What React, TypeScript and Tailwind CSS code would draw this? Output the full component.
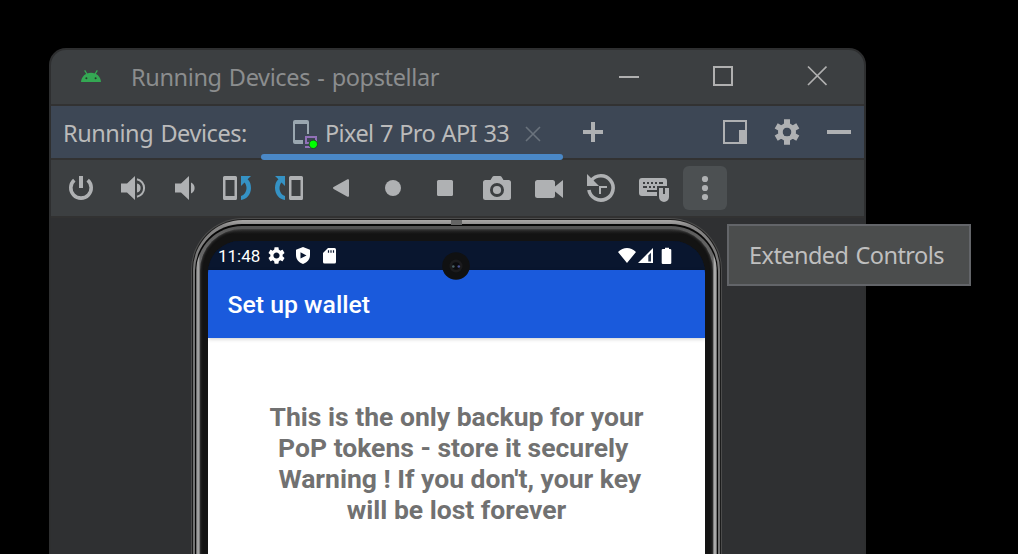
import type { ReactNode } from "react";

function Icon({ children }: { children: ReactNode }) {
  return (
    <svg width="32" height="32" viewBox="0 0 32 32" fill="#afb1b3" className="block shrink-0">
      {children}
    </svg>
  );
}

function RotateShape() {
  return (
    <>
      <path fillRule="evenodd" d="M3.5 4h11a1.5 1.5 0 0 1 1.500 1.500v21a1.500 1.500 0 0 1-1.500 1.500h-11a1.500 1.500 0 0 1-1.500-1.500v-21a1.500 1.500 0 0 1 1.500-1.500zM4.500 8v16h9V8z" />
      <path fill="#3592c4" d="M20 4h10l-3.400 3.200C29 9.300 30 12.500 30 16c0 6.500-4.500 11.500-10 12v-4c3-.8 5.500-4 5.500-8 0-2.300-.8-4.300-2-5.600L20 14z" />
    </>
  );
}

const tools: { name: string; icon: ReactNode }[] = [
  {
    name: "power",
    icon: (
      <>
        <path d="M9.300 8.200A10.200 10.200 0 1 0 22.700 8.200" fill="none" stroke="#afb1b3" strokeWidth="3.600" />
        <path d="M14 4h4v12h-4z" />
      </>
    ),
  },
  {
    name: "volume-up",
    icon: (
      <>
        <path d="M4 11.500h6L18 4v24l-8-7.500H4zM20 11.500a4.600 4.600 0 0 1 0 9z" />
        <path d="M20 7.200a9 9 0 0 1 0 17.600" fill="none" stroke="#afb1b3" strokeWidth="2" />
      </>
    ),
  },
  { name: "volume-down", icon: <path d="M6 11.500h6L20 4v24l-8-7.500H6zM22 10.500a6 6 0 0 1 0 11z" /> },
  { name: "rotate-left", icon: <RotateShape /> },
  {
    name: "rotate-right",
    icon: (
      <g transform="matrix(-1 0 0 1 32 0)">
        <RotateShape />
      </g>
    ),
  },
  { name: "back", icon: <path d="M22.500 7.300a1 1 0 0 1 1.500.9v15.600a1 1 0 0 1-1.500.9L8.600 16.900a1 1 0 0 1 0-1.800z" /> },
  { name: "home", icon: <circle cx="16" cy="16" r="8" /> },
  { name: "overview", icon: <rect x="8" y="8" width="16" height="16" rx="1.500" /> },
  {
    name: "camera",
    icon: (
      <>
        <path fillRule="evenodd" d="M4.500 8H9.500L11.500 4.800Q12 4 13 4h6q1 0 1.500.8L22.500 8h5A2.500 2.500 0 0 1 30 10.500v15a2.500 2.500 0 0 1-2.500 2.500h-23A2.500 2.500 0 0 1 2 25.500v-15A2.500 2.500 0 0 1 4.500 8zM16 11a7 7 0 1 0 0 14 7 7 0 0 0 0-14z" />
        <circle cx="16" cy="18" r="4.100" />
      </>
    ),
  },
  {
    name: "record",
    icon: <path d="M4.500 8h15A2.500 2.500 0 0 1 22 10.500v4L30 8v18l-8-6.500v4a2.500 2.500 0 0 1-2.500 2.500h-15A2.500 2.500 0 0 1 2 23.500v-13A2.500 2.500 0 0 1 4.500 8z" />,
  },
  {
    name: "snapshots",
    icon: (
      <>
        <path d="M6.200 8.500A12.200 12.200 0 1 1 3.900 18" fill="none" stroke="#afb1b3" strokeWidth="3.600" />
        <path d="M2 2v12h12z" />
        <path d="M14 14h8v2h-6v6h-2z" />
      </>
    ),
  },
  {
    name: "keyboard",
    icon: (
      <>
        <path d="M5 6h22a3 3 0 0 1 3 3v5H20v10H5a3 3 0 0 1-3-3V9a3 3 0 0 1 3-3z" />
        <path fill="#3c3f41" d="M6 10h2v2H6zM10 10h2v2h-2zM14 10h2v2h-2zM18 10h2v2h-2zM22 10h4v2h-4zM6 14h4v2H6zM12 14h2v2h-2zM16 14h2v2h-2zM10 18h10v2H10z" />
        <path d="M22 16h4v6h2v-6h4v9a5 5 0 0 1-10 0z" />
      </>
    ),
  },
];

function TitleBar() {
  return (
    <div className="flex h-[56px] items-center border-b-2 border-[#323232] bg-[#3c3f41] pl-[30px]">
      <svg width="20" height="12" viewBox="0 0 20 12" className="mb-[2px] block shrink-0">
        <path d="M4 .8l2.200 3.700M16 .8l-2.200 3.700" stroke="#34a853" strokeWidth="1.300" strokeLinecap="round" />
        <path d="M0 12C.4 6.500 4.500 2.700 10 2.700S19.600 6.500 20 12z" fill="#34a853" />
        <circle cx="5.400" cy="8.200" r="1" fill="#263b2d" />
        <circle cx="14.600" cy="8.200" r="1" fill="#263b2d" />
      </svg>
      <span className="ml-[30px] w-[486px] whitespace-nowrap text-[23.500px] leading-[32px] tracking-[-0.37px] text-[#8b8d8e] [word-spacing:1.5px]">
        Running Devices - popstellar
      </span>
      <svg width="210" height="22" viewBox="0 0 210 22" fill="none" stroke="#b0b0b0" strokeWidth="2" className="mb-[2px] block shrink-0">
        <path d="M2 12h20M97 2h18v18H97z" />
        <path d="M191 1.500l18.500 18.500M209.500 1.500L191 20" strokeWidth="1.700" />
      </svg>
    </div>
  );
}

function TabBar() {
  return (
    <div className="flex h-[54px] border-b-2 border-[#323232] bg-[#3d4755] pl-[12px] text-[23.500px] leading-[52px] text-[#bbbbbb]">
      <span className="w-[198px] whitespace-nowrap pt-px tracking-[-0.43px] [word-spacing:1.5px]">Running Devices:</span>
      <div className="relative flex w-[302px] pl-[31px]">
        <svg width="26" height="30" viewBox="0 0 26 30" className="mt-[13px] block shrink-0">
          <path fill="#9aa7b0" d="M3 1h12a2 2 0 0 1 2 2v12h-2V5H3v16h8v4H3a2 2 0 0 1-2-2V3a2 2 0 0 1 2-2z" />
          <path d="M14 18h10v6H14zM13 28h8" fill="none" stroke="#9171b8" strokeWidth="2" />
          <circle cx="21.300" cy="25.300" r="4.200" fill="#00ff00" stroke="#28412d" strokeWidth="1" />
        </svg>
        <span className="ml-[7px] w-[200px] shrink-0 whitespace-nowrap pt-px tracking-[-0.62px] [word-spacing:1px]">Pixel 7 Pro API 33</span>
        <svg width="16" height="16" viewBox="0 0 16 16" className="mt-[20px] block shrink-0">
          <path d="M1 1l14 14M15 1L1 15" stroke="#6a737d" strokeWidth="1.600" />
        </svg>
        <div className="absolute bottom-[-2px] left-0 h-[6px] w-[302px] rounded-full bg-[#4a88c7]" />
      </div>
      <svg width="20" height="20" viewBox="0 0 20 20" className="ml-[20px] mt-[16px] block shrink-0">
        <path d="M0 10h20M10 0v20" stroke="#afb1b3" strokeWidth="4" />
      </svg>
      <svg width="24" height="24" viewBox="0 0 24 24" className="ml-[120px] mt-[14px] block shrink-0">
        <path d="M1 1h22v22H1z" fill="none" stroke="#afb1b3" strokeWidth="2" />
        <path d="M16 10h8v14h-8z" fill="#afb1b3" />
      </svg>
      <svg width="26" height="26" viewBox="-13 -13 26 26" className="ml-[27px] mt-[13px] block shrink-0" fill="#afb1b3">
        <path d="M-3-12.700h6V12.700h-6zM-12.300-3.500l3-5.200L12.300 3.500l-3 5.200zM-9.300 8.700l-3-5.200L9.300-8.700l3 5.200z" mask="url(#gear-hole)" />
        <circle r="9" mask="url(#gear-hole)" />
        <mask id="gear-hole" maskUnits="userSpaceOnUse" x="-13" y="-13" width="26" height="26">
          <path d="M-13-13h26v26h-26z" fill="#fff" />
          <circle r="4.500" fill="#000" />
        </mask>
      </svg>
      <div className="ml-[27px] mt-[24px] h-[4px] w-[24px] bg-[#afb1b3]" />
    </div>
  );
}

function Toolbar() {
  return (
    <div className="flex h-[56px] items-center bg-[#3c3f41] pl-[4px]">
      {tools.map((tool) => (
        <div key={tool.name} className="flex w-[52px] shrink-0 justify-center">
          <Icon>{tool.icon}</Icon>
        </div>
      ))}
      <div className="ml-[4px] flex h-[44px] w-[44px] items-center justify-center rounded-[6px] bg-[#4c5052]">
        <Icon>
          <circle cx="16" cy="7" r="3.100" />
          <circle cx="16" cy="16" r="3.100" />
          <circle cx="16" cy="25" r="3.100" />
        </Icon>
      </div>
    </div>
  );
}

function StatusBar() {
  return (
    <div className="flex h-[29px] bg-[#09162f] pl-[10px] font-['Roboto',sans-serif] text-[17px] leading-[31px] text-white">
      <span className="w-[50px]">11:48</span>
      <svg width="17" height="17" viewBox="2 2 20 20" fill="#fff" className="mt-[6px] block shrink-0">
        <path d="M19.140 12.940c.04-.3.060-.61.060-.94 0-.32-.02-.64-.07-.94l2.030-1.580c.18-.14.230-.41.120-.61l-1.920-3.320c-.12-.22-.37-.29-.59-.22l-2.390.96c-.5-.38-1.030-.7-1.620-.94l-.36-2.540c-.04-.24-.24-.41-.48-.41h-3.840c-.24 0-.43.17-.47.41l-.36 2.540c-.59.24-1.130.57-1.620.94l-2.390-.96c-.22-.08-.47 0-.59.22L2.740 8.870c-.12.21-.08.470.120.610l2.030 1.580c-.05.3-.09.630-.09.940s.02.640.070.940l-2.030 1.580c-.18.140-.23.410-.12.610l1.920 3.320c.12.220.370.290.590.220l2.390-.96c.5.380 1.030.7 1.620.940l.36 2.540c.05.240.240.410.480.410h3.840c.24 0 .44-.17.470-.41l.36-2.540c.59-.24 1.130-.56 1.620-.94l2.390.96c.22.080.470 0 .59-.22l1.920-3.320c.12-.22.070-.47-.12-.61l-2.010-1.580zM12 15.600c-1.980 0-3.600-1.620-3.600-3.600s1.620-3.600 3.600-3.600 3.600 1.620 3.600 3.600-1.620 3.600-3.600 3.600z" />
      </svg>
      <svg width="14" height="17" viewBox="0 0 14 17" className="ml-[11px] mt-[6px] block shrink-0">
        <path fill="#fff" fillRule="evenodd" d="M7 0l7 2.800V8c0 4-2.500 7.500-7 9-4.500-1.500-7-5-7-9V2.800zM4.500 5.300v6.200L10.500 8.400z" />
      </svg>
      <svg width="13" height="16" viewBox="0 0 13 16" className="ml-[13px] mt-[7px] block shrink-0">
        <path fill="#fff" d="M5 0h6.500Q13 0 13 1.500v12.500Q13 15.500 11.500 15.500h-10Q0 15.500 0 14V5z" />
        <path stroke="#09162f" strokeWidth="1.200" d="M5.500 2.300v2.500M8 2.300v2.500M10.500 2.300v2.500" />
      </svg>
      <svg width="54" height="18" viewBox="0 0 54 18" fill="#fff" className="ml-[282px] mt-[6px] block shrink-0">
        <path d="M0 5C5.500-.2 12.500-.2 18 5L9 16zM20 16L35 1v15z" />
        <path d="M30.300 8.500l2.700-2.700v8.700h-2.700z" fill="#26354d" />
        <path d="M44.500 2H47V.700h4V2h1.500l.8.800v13.500l-.8.700h-8l-.8-.7V2.800z" />
      </svg>
    </div>
  );
}

function Phone() {
  return (
    <div className="ml-[140px] w-[531px] rounded-t-[52px] bg-[#4c4c4c] px-px pt-px">
      <div className="rounded-t-[51px] bg-[#1b1b1b] px-px pt-px">
        <div className="relative rounded-t-[50px] bg-[linear-gradient(#aaa8a7,#858484_6px,#737373_60px)] px-[2px] pt-[4px]">
          <div className="absolute left-[258px] top-0 h-[5px] w-[11px] bg-[#646464]" />
          <div className="rounded-t-[47px] bg-[#070707] px-px pt-[2px]">
            <div className="rounded-t-[46px] bg-[linear-gradient(90deg,#555,#b5b5b5_2px,#666_4px,#555_45px,#555_calc(100%-45px),#666_calc(100%-4px),#c2c2c2_calc(100%-2px),#555)] px-[4px] pt-[3px]">
              <div className="rounded-t-[42px] bg-[linear-gradient(#2c2c2c,#131313_5px)] px-[8px] pt-[12px] shadow-[inset_0_0_3px_#555]">
                <div className="relative h-[315px]">
                  <div className="h-full overflow-hidden rounded-t-[32px] bg-[#09162f]">
                    <StatusBar />
                    <div className="relative h-[68px] bg-[#1a5adc] pl-[19.500px] font-['Roboto',sans-serif] text-[24.800px] font-medium leading-[70px] text-white shadow-[0_1px_4px_#0003]">
                      Set up wallet
                    </div>
                    <div className="h-[218px] whitespace-pre bg-white pt-[63px] text-center font-['Roboto',sans-serif] text-[26.500px] font-bold leading-[31px] text-[#717171]">
                      <p>This is the only backup for your</p>
                      <p>{"PoP tokens - store it securely "}</p>
                      <p>{" Warning ! If you don't, your key"}</p>
                      <p>will be lost forever</p>
                    </div>
                  </div>
                  <svg width="28" height="28" viewBox="0 0 28 28" className="absolute left-[234px] top-[11px] block">
                    <circle cx="14" cy="14" r="13.800" fill="#101112" />
                    <circle cx="14" cy="14" r="6.500" fill="#1b1b1d" />
                    <circle cx="14" cy="14" r="3.800" fill="#0b0b0e" />
                    <circle cx="11.300" cy="14.500" r="1.300" fill="#4a6266" />
                    <circle cx="16.800" cy="14.500" r="1.300" fill="#48518f" />
                  </svg>
                </div>
              </div>
            </div>
          </div>
        </div>
      </div>
    </div>
  );
}

export default function App() {
  return (
    <div className="relative h-[554px] w-[1018px] overflow-hidden bg-black pl-[49px] pt-[48px] font-['Noto_Sans',sans-serif]">
      <div className="h-[506px] w-[817px] overflow-hidden rounded-t-[17px] border-x-2 border-t-2 border-[#2e2f30] bg-[#2f3032]">
        <TitleBar />
        <TabBar />
        <Toolbar />
        <div className="border-t-2 border-[#323232]">
          <Phone />
        </div>
      </div>
      <div className="absolute left-[727px] top-[224px] h-[62px] w-[244px] whitespace-nowrap border-2 border-[#636569] bg-[#4b4d4d] pl-[20px] text-[23.500px] leading-[58px] tracking-[-0.56px] text-[#bfbfbf] [word-spacing:1.5px]">
        Extended Controls
      </div>
    </div>
  );
}
